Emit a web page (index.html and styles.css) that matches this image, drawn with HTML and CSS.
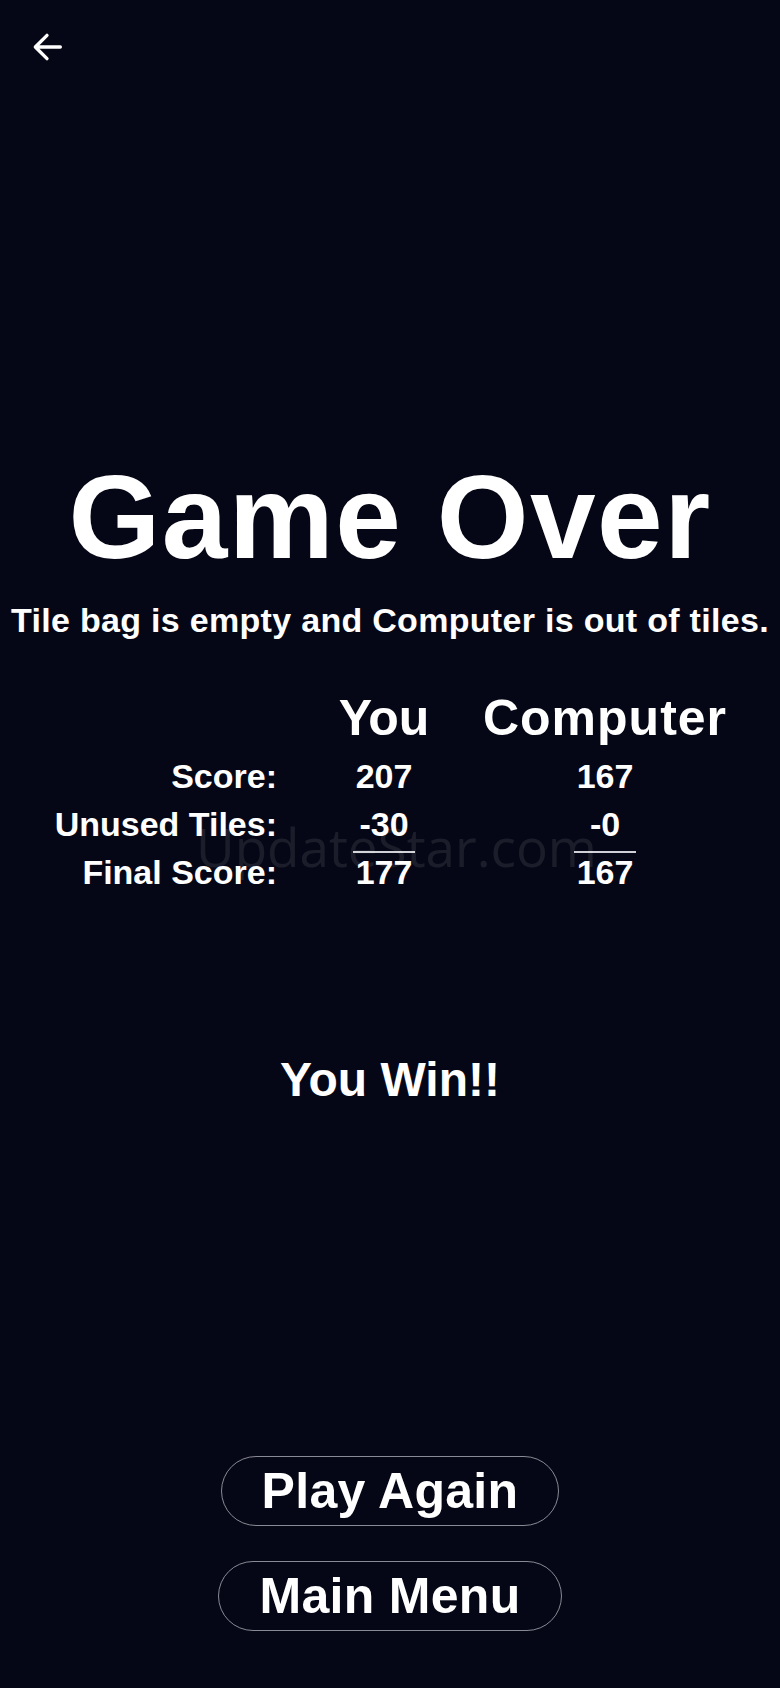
FILE: index.html
```html
<!DOCTYPE html>
<html lang="en">

<head>
    <meta charset="UTF-8">
    <meta name="viewport" content="width=device-width, initial-scale=1.0">
    <title>Game Over</title>
    <link rel="stylesheet" href="styles.css">
</head>

<body>
    <div class="topbar">
        <button class="back-btn" aria-label="Back">
            <svg viewBox="0 0 24 24" width="40" height="40">
                <path d="M20 12H5M12 5l-7 7 7 7" fill="none" stroke="#fff" stroke-width="2" stroke-linecap="round" stroke-linejoin="round" />
            </svg>
        </button>
    </div>

    <h1 class="title">Game Over</h1>
    <p class="reason">Tile bag is empty and Computer is out of tiles.</p>

    <div class="scores">
        <div class="score-grid">
            <div></div>
            <div class="head">You</div>
            <div class="head wide">Computer</div>

            <div class="label">Score:</div>
            <div class="val">207</div>
            <div class="val">167</div>

            <div class="label">Unused Tiles:</div>
            <div class="val"><span class="sum">-30</span></div>
            <div class="val"><span class="sum">-0</span></div>

            <div class="label">Final Score:</div>
            <div class="val">177</div>
            <div class="val">167</div>
        </div>
        <div class="mark">UpdateStar.com</div>
    </div>

    <div class="result">You Win!!</div>

    <div class="actions">
        <button class="pill">Play Again</button>
        <button class="pill">Main Menu</button>
    </div>
</body>

</html>
```

FILE: styles.css
```css
body {
    margin: 0;
    height: 1688px;
    display: flex;
    flex-direction: column;
    background-color: #060716;
    color: #ffffff;
    font-family: "Liberation Sans", Arial, sans-serif;
    font-weight: bold;
    overflow: hidden;
}

.topbar {
    padding: 27px 0 0 27px;
    height: 40px;
}

.back-btn {
    background: none;
    border: none;
    padding: 0;
    width: 40px;
    height: 40px;
    cursor: pointer;
}

.title {
    margin: 391px 0 0;
    font-size: 118px;
    line-height: 1;
    letter-spacing: 1.5px;
    text-align: center;
}

.reason {
    margin: 27px 0 0;
    font-size: 34px;
    line-height: 1;
    letter-spacing: 0.3px;
    text-align: center;
}

.scores {
    position: relative;
    margin-top: 56px;
}

.score-grid {
    display: grid;
    grid-template-columns: 277px 214px 228px;
}

.head {
    font-size: 50px;
    line-height: 1;
    text-align: center;
    margin-bottom: 9px;
}

/* header is wider than its column, let it spill evenly both sides */
.head.wide {
    letter-spacing: 1px;
    margin-left: -22px;
    margin-right: -22px;
}

.label,
.val {
    font-size: 34px;
    line-height: 48px;
}

.label {
    text-align: right;
}

.val {
    text-align: center;
}

.sum {
    display: block;
    width: 62px;
    height: 51px;
    margin: 0 auto -5px;
    border-bottom: 2px solid #d0d0d8;
}

/* faint watermark across the score table */
.mark {
    position: absolute;
    left: 196px;
    top: 127px;
    font-family: "Open Sans", sans-serif;
    font-weight: normal;
    font-size: 53px;
    line-height: 1;
    color: rgba(255, 255, 255, 0.09);
    pointer-events: none;
}

.result {
    margin-top: 160px;
    font-size: 48px;
    line-height: 1;
    text-align: center;
}

.actions {
    margin-top: auto;
    padding-bottom: 57px;
    display: flex;
    flex-direction: column;
    align-items: center;
    gap: 35px;
}

.pill {
    height: 70px;
    padding: 0 40px;
    display: flex;
    align-items: center;
    background: transparent;
    color: #ffffff;
    border: 1.5px solid #8a8a96;
    border-radius: 35px;
    font-family: "Liberation Sans", Arial, sans-serif;
    font-weight: bold;
    font-size: 50px;
    letter-spacing: 0.3px;
    cursor: pointer;
}
```
